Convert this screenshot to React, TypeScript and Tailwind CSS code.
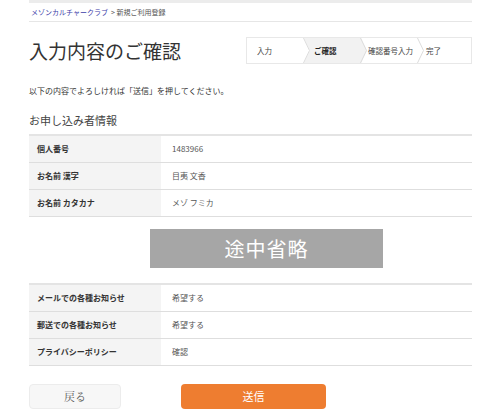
import React from "react";

const font = { fontFamily: '"Noto Sans CJK JP", "Noto Sans", sans-serif' };

function Row({ label, value }: { label: string; value: string }) {
  return (
    <div className="flex h-[27px] border-b border-[#dedede]">
      <div className="w-[132px] bg-[#f4f4f4] flex items-center pl-[8px] text-[8px] font-bold text-[#333]">
        {label}
      </div>
      <div className="flex-1 flex items-center pl-[11px] text-[8px] text-[#555]">{value}</div>
    </div>
  );
}

function Stepper() {
  const steps = ["入力", "ご確認", "確認番号入力", "完了"];
  return (
    <div className="flex h-[27px] w-[226px] border border-[#e8e8e8] bg-white">
      {steps.map((s, i) => {
        const active = i === 1;
        const last = i === steps.length - 1;
        return (
          <div
            key={s}
            className={`relative flex items-center text-[7.5px] whitespace-nowrap ${i === 0 ? "w-[57px] pl-[10px]" : i === 1 ? "w-[57px] pl-[10px]" : i === 2 ? "w-[57px] pl-[7px]" : "flex-1 pl-[8px]"} ${active ? "font-bold text-[#222]" : "text-[#444]"}`}
          >
            {active && (
              <svg className="absolute left-0 top-0 overflow-visible" width="57" height="25">
                <polygon points="0,0 57,0 63,12.5 57,25 0,25 6,12.5" fill="#f2f2f2" />
              </svg>
            )}
            <span className="relative">{s}</span>
            {!last && (
              <svg className="absolute top-0 right-[-6px] z-10" width="7" height="25">
                <polyline points="0.5,0 6.5,12.5 0.5,25" fill="none" stroke="#dcdcdc" strokeWidth="1" />
              </svg>
            )}
          </div>
        );
      })}
    </div>
  );
}

export default function App() {
  return (
    <div className="w-[500px] h-[418px] bg-white overflow-hidden" style={font}>
      <div className="mx-[29px] w-[443px]">
        <div className="h-[3px] bg-[#ececec]" />
        <div className="h-[19px] flex items-center pl-[2px] border-b border-[#e6e6e6] text-[7px]">
          <span className="text-[#3c3ca8]">メゾンカルチャークラブ</span>
          <span className="text-[#555] ml-[3px]">&gt; 新規ご利用登録</span>
        </div>
        <div className="flex items-center justify-between mt-[15px] h-[27px]">
          <h1 className="text-[19px] text-[#333] leading-none">入力内容のご確認</h1>
          <Stepper />
        </div>
        <p className="mt-[23px] text-[8px] text-[#333] leading-none">
          以下の内容でよろしければ「送信」を押してください。
        </p>
        <h2 className="mt-[20px] text-[11px] text-[#444] leading-none">お申し込み者情報</h2>
        <div className="mt-[8px] border-t-2 border-[#e4e4e4]">
          <Row label="個人番号" value="1483966" />
          <Row label="お名前 漢字" value="目夷 文香" />
          <Row label="お名前 カタカナ" value="メゾ フミカ" />
        </div>
        <div className="flex mt-[12px]">
          <div className="ml-[121px] w-[233px] h-[39px] bg-[#a6a6a6] flex items-center justify-center text-white text-[20px] tracking-[1px]">
            途中省略
          </div>
        </div>
        <div className="mt-[15px] border-t-2 border-[#e4e4e4]">
          <Row label="メールでの各種お知らせ" value="希望する" />
          <Row label="郵送での各種お知らせ" value="希望する" />
          <Row label="プライバシーポリシー" value="確認" />
        </div>
        <div className="flex mt-[18px] gap-[60px]">
          <button
            className="w-[92px] h-[25px] rounded-[4px] bg-[#f7f7f7] border border-[#ececec] text-[11px] text-[#555]"
            style={{ fontFamily: '"Noto Serif CJK JP", "Noto Sans CJK JP", serif' }}
          >
            戻る
          </button>
          <button className="w-[145px] h-[25px] rounded-[4px] bg-[#ee7d30] text-white text-[11px]">
            送信
          </button>
        </div>
      </div>
    </div>
  );
}
